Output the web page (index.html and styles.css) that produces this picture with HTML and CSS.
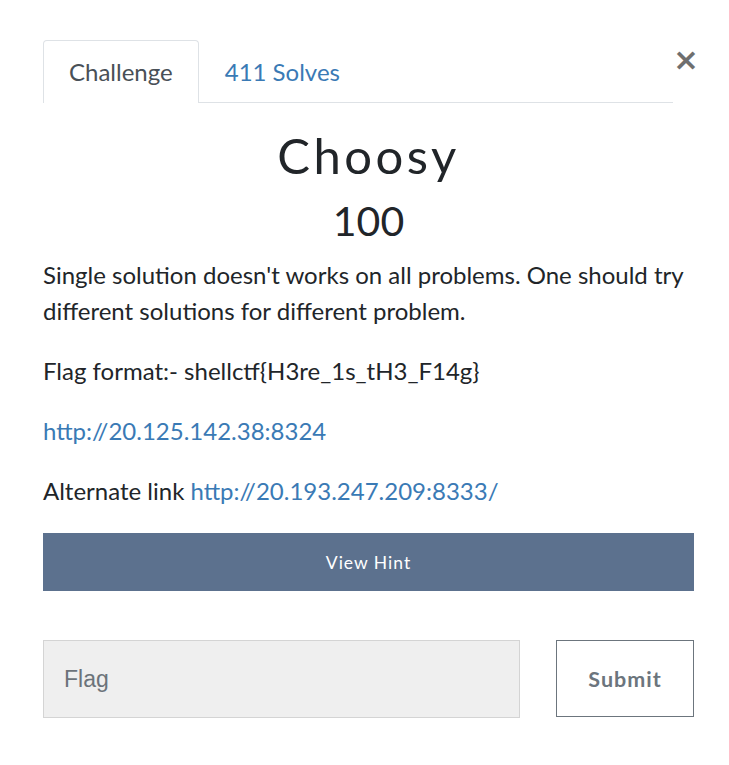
FILE: index.html
```html
<!DOCTYPE html>
<html>
<head>
<meta charset="utf-8">
<link rel="stylesheet" href="styles.css">
</head>
<body>
<div class="modal">
  <div class="header">
    <ul class="tabs">
      <li class="tab active">Challenge</li>
      <li class="tab"><a href="#">411 Solves</a></li>
    </ul>
    <button class="close" aria-label="Close">×</button>
  </div>
  <h2 class="title">Choosy</h2>
  <h3 class="value">100</h3>
  <div class="desc">
    <p>Single solution doesn't works on all problems. One should try different solutions for different problem.</p>
    <p>Flag format:- shellctf{H3re_1s_tH3_F14g}</p>
    <p><a href="#">http://20.125.142.38:8324</a></p>
    <p>Alternate link <a href="#">http://20.193.247.209:8333/</a></p>
  </div>
  <button class="hint">View Hint</button>
  <div class="submit-row">
    <input class="flag" type="text" placeholder="Flag">
    <button class="submit">Submit</button>
  </div>
</div>
</body>
</html>
```
FILE: styles.css
```css
html, body {
  margin: 0;
  padding: 0;
  background: #fff;
}
body {
  font-family: Lato, "Open Sans", sans-serif;
  color: #212529;
}
.modal {
  width: 651px;
  padding: 40px 0 0 43px;
}
.header {
  display: flex;
  align-items: flex-start;
}
.tabs {
  list-style: none;
  margin: 0;
  padding: 0;
  display: flex;
  flex: 0 0 630px;
  border-bottom: 1px solid #dee2e6;
}
.tab {
  height: 61px;
  box-sizing: border-box;
  padding: 0 25px 0 25px;
  font-size: 24px;
  line-height: 62px;
  border: 1px solid transparent;
  border-bottom: none;
  margin-bottom: -1px;
  border-radius: 4px 4px 0 0;
  color: #495057;
}
.tab.active {
  border-color: #dee2e6;
  background: #fff;
  height: 63px;
}
.tab a {
  color: #3a7ab5;
  text-decoration: none;
}
.close {
  margin-left: 0;
  width: 21px;
  margin-top: 1px;
  background: none;
  border: none;
  padding: 0;
  font-family: "DejaVu Sans", sans-serif;
  font-size: 31px;
  line-height: 36px;
  color: #6f6f6f;
  font-weight: bold;
  text-align: right;
}
.title {
  margin: 22px 0 0;
  text-align: center;
  font-weight: 400;
  font-size: 49px;
  letter-spacing: 3.5px;
  line-height: 60px;
  color: #212529;
}
.value {
  margin: 12px 0 0;
  text-align: center;
  font-weight: 400;
  font-size: 41px;
  line-height: 48px;
  color: #212529;
}
.desc {
  margin-top: 12px;
}
.desc p {
  margin: 0 0 24px;
  font-size: 24px;
  line-height: 36px;
}
.desc a {
  color: #3a7ab5;
  text-decoration: none;
}
.hint {
  display: block;
  width: 651px;
  height: 58px;
  margin-top: 6px;
  border: none;
  background: #5c718e;
  color: #fff;
  font-family: Lato, sans-serif;
  font-size: 17.5px;
  letter-spacing: 1px;
}
.submit-row {
  display: flex;
  justify-content: space-between;
  margin-top: 49px;
}
.flag {
  width: 477px;
  height: 78px;
  box-sizing: border-box;
  background: #efefef;
  border: 1px solid #d4d4d4;
  padding: 0 20px;
  font-family: "Liberation Sans", Arial, sans-serif;
  font-size: 23px;
  color: #495057;
}
.flag::placeholder {
  color: #6c737a;
}
.submit {
  width: 138px;
  height: 77px;
  box-sizing: border-box;
  background: #fff;
  border: 1px solid #6c757d;
  color: #6c757d;
  font-family: Lato, sans-serif;
  font-weight: bold;
  font-size: 21.5px;
  letter-spacing: 1px;
}
```
